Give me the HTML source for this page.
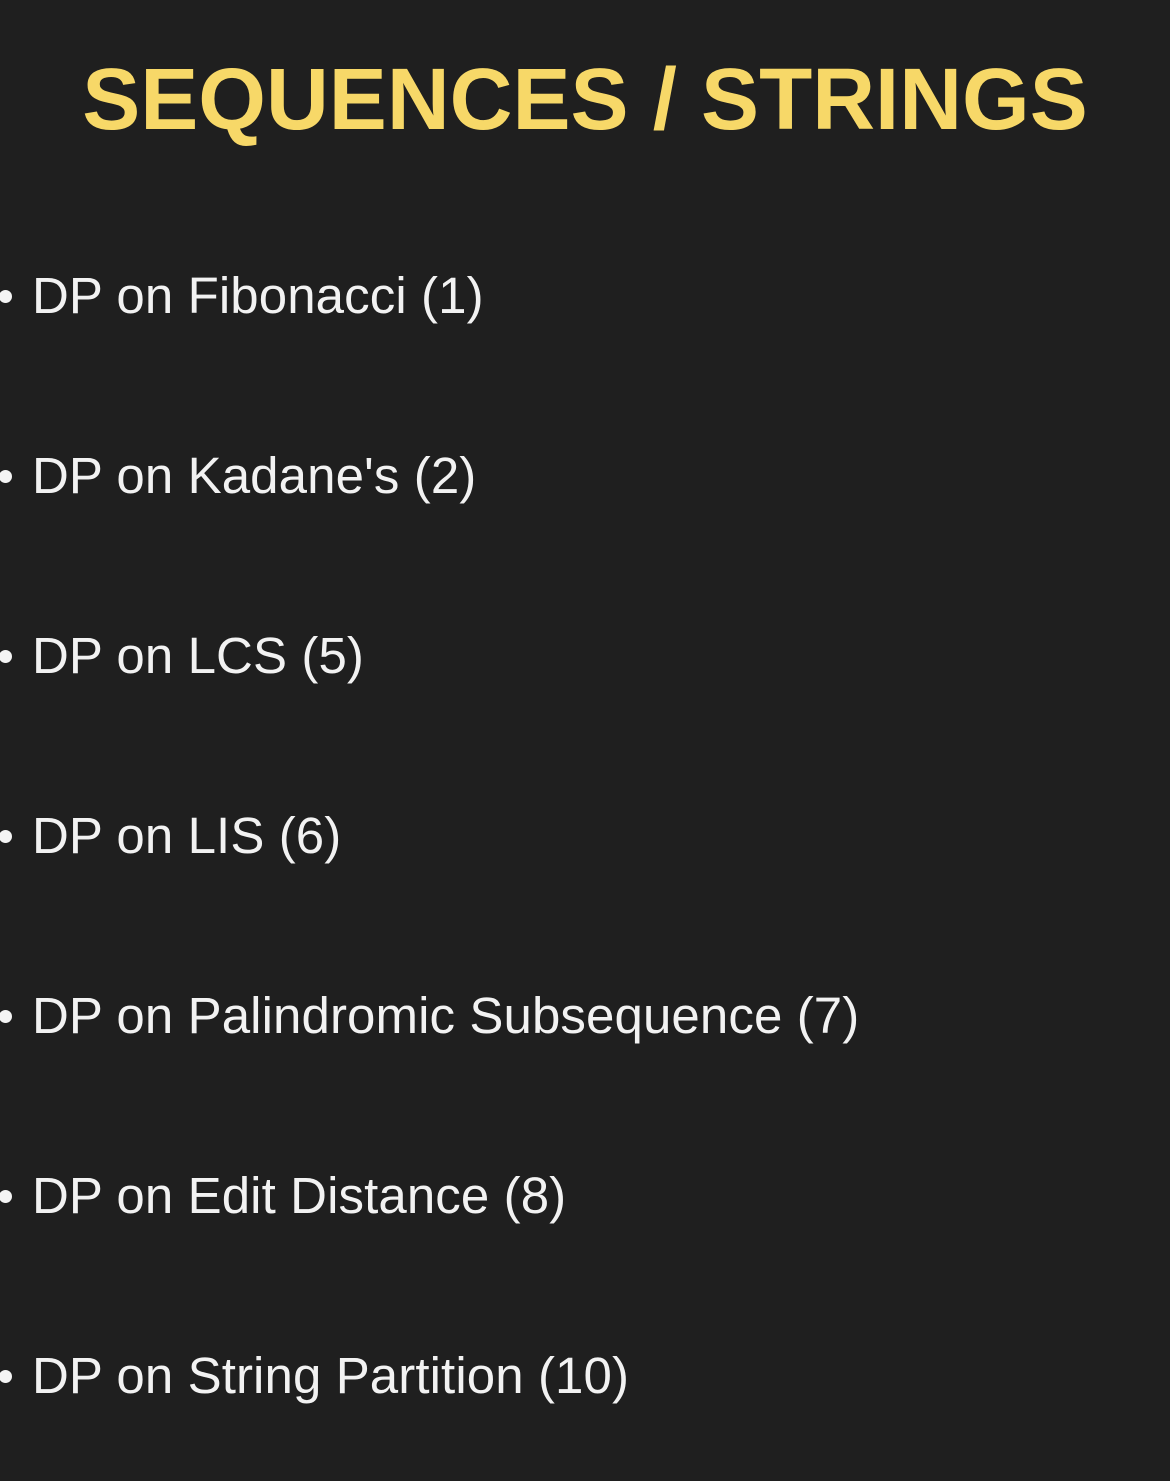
<!DOCTYPE html>
<html><head><meta charset="utf-8"><style>
html,body{margin:0;padding:0}
body{width:1170px;height:1481px;background:#1f1f1f;position:relative;overflow:hidden;font-family:"Liberation Sans",sans-serif}
.t{position:absolute;left:0;width:1170px;top:56px;text-align:center;font-size:87px;line-height:87px;font-weight:bold;color:#f7d868;white-space:nowrap}
.i{position:absolute;left:32px;font-size:51px;line-height:51px;color:#f2f2f2;white-space:nowrap;letter-spacing:0.1px}
.d{position:absolute;left:-1px;width:13px;height:13px;border-radius:50%;background:#f4f4f4}
</style></head><body>
<div class="t">SEQUENCES / STRINGS</div>
<div class="d" style="top:290px"></div><div class="i" style="top:270px">DP on Fibonacci (1)</div>
<div class="d" style="top:470px"></div><div class="i" style="top:450px">DP on Kadane's (2)</div>
<div class="d" style="top:650px"></div><div class="i" style="top:630px">DP on LCS (5)</div>
<div class="d" style="top:830px"></div><div class="i" style="top:810px">DP on LIS (6)</div>
<div class="d" style="top:1010px"></div><div class="i" style="top:990px">DP on Palindromic Subsequence (7)</div>
<div class="d" style="top:1190px"></div><div class="i" style="top:1170px">DP on Edit Distance (8)</div>
<div class="d" style="top:1370px"></div><div class="i" style="top:1350px">DP on String Partition (10)</div>
</body></html>
